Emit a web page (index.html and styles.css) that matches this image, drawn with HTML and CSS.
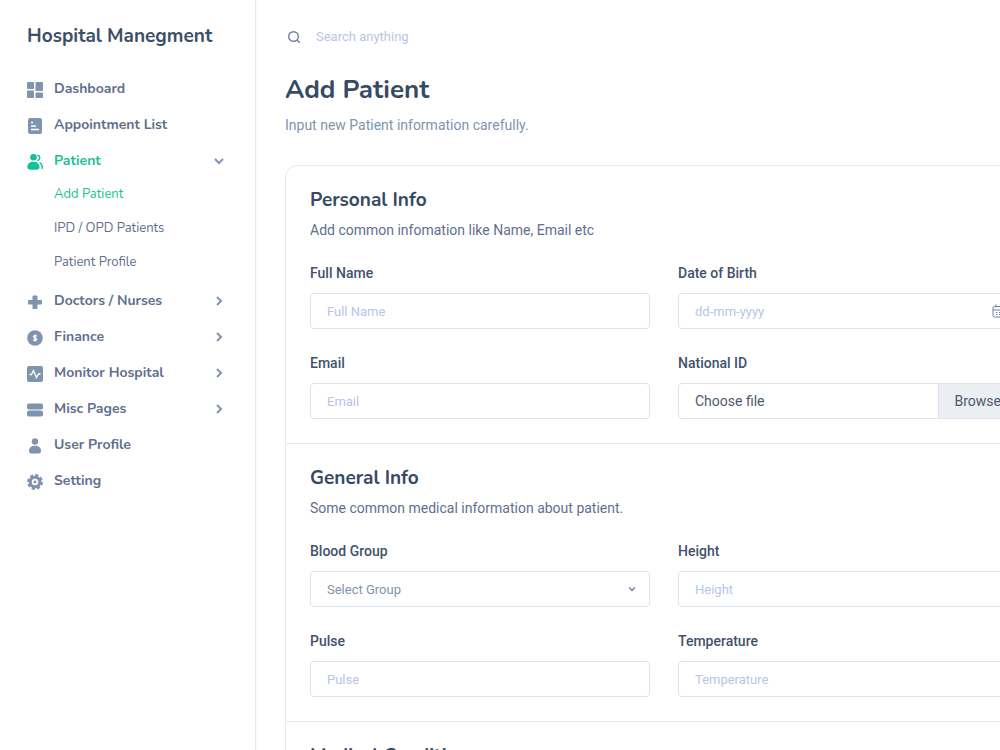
FILE: index.html
```html
<!DOCTYPE html>
<html lang="en">
<head>
  <meta charset="UTF-8" />
  <meta name="viewport" content="width=device-width, initial-scale=1" />
  <title>Add Patient - Hospital Manegment</title>
  <link rel="stylesheet" href="styles.css">
</head>
<body>
  <!-- Sidebar -->
  <aside class="sidebar">
    <a class="brand" href="#">Hospital Manegment</a>

    <nav>
      <ul class="menu">
        <li>
          <a class="menu-link" href="#">
            <svg class="icon" viewBox="0 0 16 16"><rect x="0" y="0" width="7" height="7" rx="1"/><rect x="8.500" y="0" width="7.500" height="9" rx="1"/><rect x="0" y="8.500" width="7" height="7.500" rx="1"/><rect x="8.500" y="10.500" width="7.500" height="5.500" rx="1"/></svg>
            <span>Dashboard</span>
          </a>
        </li>
        <li>
          <a class="menu-link" href="#">
            <svg class="icon" viewBox="0 0 16 16"><rect x="1" y="0" width="14" height="16" rx="2"/><path class="cut" d="M4 4.500h2M4 8h5M4 11.500h8"/></svg>
            <span>Appointment List</span>
          </a>
        </li>
        <li>
          <a class="menu-link active" href="#">
            <svg class="icon" viewBox="0 0 16 16"><circle cx="6.500" cy="3.300" r="3.300"/><path d="M.3 13.200C.3 9.800 3 7.800 6.500 7.800s6 2 6 5.400c0 1.800-1.500 2.600-6 2.600S.3 15 .3 13.200z"/><path class="line" d="M10.800 1.200c2.600.6 2.600 4.400.2 5.200M13 8.800c1.900 1 2.600 3 2.200 5.700"/></svg>
            <span>Patient</span>
            <svg class="arrow" viewBox="0 0 10 10"><path d="M1 3l4 4 4-4"/></svg>
          </a>
          <ul class="submenu">
            <li><a class="active" href="#">Add Patient</a></li>
            <li><a href="#">IPD / OPD Patients</a></li>
            <li><a href="#">Patient Profile</a></li>
          </ul>
        </li>
        <li>
          <a class="menu-link" href="#">
            <svg class="icon" viewBox="0 0 16 16"><path d="M6.500 1.500h3a1 1 0 0 1 1 1v3.500h3.500a1 1 0 0 1 1 1v2.500a1 1 0 0 1-1 1h-3.500v3.500a1 1 0 0 1-1 1h-3a1 1 0 0 1-1-1v-3.500H2a1 1 0 0 1-1-1V7a1 1 0 0 1 1-1h3.500V2.500a1 1 0 0 1 1-1z"/></svg>
            <span>Doctors / Nurses</span>
            <svg class="arrow" viewBox="0 0 10 10"><path d="M3 1l4 4-4 4"/></svg>
          </a>
        </li>
        <li>
          <a class="menu-link" href="#">
            <svg class="icon" viewBox="0 0 16 16"><circle cx="8" cy="8" r="7.800"/><path class="cut" d="M9.800 6.400C9.200 5.300 6.500 5.400 6.500 6.800c0 1.500 3.200.9 3.200 2.500 0 1.400-2.800 1.500-3.500.3M8 4.500v7"/></svg>
            <span>Finance</span>
            <svg class="arrow" viewBox="0 0 10 10"><path d="M3 1l4 4-4 4"/></svg>
          </a>
        </li>
        <li>
          <a class="menu-link" href="#">
            <svg class="icon" viewBox="0 0 16 16"><rect x="0" y="0" width="16" height="16" rx="2"/><path class="cut" d="M2.500 8.500h2L6.500 4.500l3 7L11.500 8h2"/></svg>
            <span>Monitor Hospital</span>
            <svg class="arrow" viewBox="0 0 10 10"><path d="M3 1l4 4-4 4"/></svg>
          </a>
        </li>
        <li>
          <a class="menu-link" href="#">
            <svg class="icon" viewBox="0 0 16 16"><rect x="0" y="1.500" width="16" height="6" rx="2"/><rect x="0" y="8.500" width="16" height="6" rx="2"/></svg>
            <span>Misc Pages</span>
            <svg class="arrow" viewBox="0 0 10 10"><path d="M3 1l4 4-4 4"/></svg>
          </a>
        </li>
        <li>
          <a class="menu-link" href="#">
            <svg class="icon" viewBox="0 0 16 16"><circle cx="8" cy="3.500" r="3.200"/><path d="M2 13c0-3.500 2.500-5.200 6-5.200s6 1.700 6 5.200c0 1.700-1.200 2.500-2.500 2.500h-7C3.200 15.500 2 14.700 2 13z"/></svg>
            <span>User Profile</span>
          </a>
        </li>
        <li>
          <a class="menu-link" href="#">
            <svg class="icon" viewBox="0 0 16 16"><circle cx="8" cy="8" r="6.300"/><circle class="teeth" cx="8" cy="8" r="6.600"/><circle class="hole" cx="8" cy="8" r="3.200"/><circle cx="8" cy="8" r="1.400"/></svg>
            <span>Setting</span>
          </a>
        </li>
      </ul>
    </nav>
  </aside>

  <!-- Page content -->
  <main class="content">
    <form class="search">
      <svg viewBox="0 0 14 14"><circle cx="6.500" cy="6.500" r="4.800"/><path d="M10 10l2.800 2.800"/></svg>
      <input type="text" placeholder="Search anything" aria-label="Search anything" />
    </form>

    <header class="page-head">
      <h1>Add Patient</h1>
      <p>Input new Patient information carefully.</p>
    </header>

    <form class="card">
      <section>
        <h2>Personal Info</h2>
        <p>Add common infomation like Name, Email etc</p>
        <div class="fields">
          <div class="field">
            <label for="fullName">Full Name</label>
            <input type="text" id="fullName" placeholder="Full Name" />
          </div>
          <div class="field">
            <label for="birthDate">Date of Birth</label>
            <div class="control">
              <input type="text" id="birthDate" placeholder="dd-mm-yyyy" />
              <svg class="calendar" viewBox="0 0 14 14"><rect x="1" y="2.500" width="12" height="10.500" rx="1.500"/><path d="M1 6h12M4 .5v3M10 .5v3M4 8.500h1.500M4 10.500h1.500M7 8.500h1.500M7 10.500h1.500"/></svg>
            </div>
          </div>
          <div class="field">
            <label for="email">Email</label>
            <input type="email" id="email" placeholder="Email" />
          </div>
          <div class="field">
            <label for="nationalId">National ID</label>
            <div class="control">
              <input class="file-input" type="file" id="nationalId" />
              <label class="file" for="nationalId">
                <span class="file-name">Choose file</span>
                <span class="file-button">Browse</span>
              </label>
            </div>
          </div>
        </div>
      </section>

      <section>
        <h2>General Info</h2>
        <p>Some common medical information about patient.</p>
        <div class="fields">
          <div class="field">
            <label for="bloodGroup">Blood Group</label>
            <div class="control">
              <select id="bloodGroup">
                <option>Select Group</option>
                <option>A+</option>
                <option>B+</option>
                <option>AB+</option>
                <option>O+</option>
              </select>
              <svg class="caret" viewBox="0 0 8 8"><path d="M1 2.500l3 3 3-3"/></svg>
            </div>
          </div>
          <div class="field">
            <label for="height">Height</label>
            <input type="text" id="height" placeholder="Height" />
          </div>
          <div class="field">
            <label for="pulse">Pulse</label>
            <input type="text" id="pulse" placeholder="Pulse" />
          </div>
          <div class="field">
            <label for="temperature">Temperature</label>
            <input type="text" id="temperature" placeholder="Temperature" />
          </div>
        </div>
      </section>

      <section>
        <h2>Medical Condition</h2>
      </section>
    </form>
  </main>
</body>
</html>
```
FILE: styles.css
```css
* {
  box-sizing: border-box;
  margin: 0;
  padding: 0;
}

body {
  display: flex;
  min-height: 100vh;
  font-family: Roboto, "Liberation Sans", sans-serif;
  font-size: 14px;
  line-height: 24px;
  color: #5f6f8d;
  background: #fff;
  overflow-x: hidden;
}

ul {
  list-style: none;
}

a {
  color: inherit;
  text-decoration: none;
}

/* Sidebar */
.sidebar {
  flex: 0 0 256px;
  padding: 20px 31px 20px 27px;
  border-right: 1px solid #e5e9f2;
  box-shadow: 0 1px 3px rgba(54, 74, 99, 0.05);
}

.sidebar,
h1,
h2 {
  font-family: Nunito, Lato, sans-serif;
}

.brand {
  display: block;
  margin-bottom: 19px;
  font-size: 19px;
  font-weight: 700;
  line-height: 32px;
  color: #3c4f68;
  white-space: nowrap;
}

.menu-link {
  display: flex;
  align-items: center;
  gap: 11px;
  height: 36px;
  font-size: 14px;
  font-weight: 700;
}

.icon {
  width: 16px;
  height: 16px;
  margin-top: 2px;
  fill: #8094ae;
}

.icon .cut {
  fill: none;
  stroke: #fff;
  stroke-width: 1.3;
}

.icon .line {
  fill: none;
  stroke: #8094ae;
  stroke-width: 1.4;
  stroke-linecap: round;
}

.icon .teeth {
  fill: none;
  stroke: #8094ae;
  stroke-width: 2.6;
  stroke-dasharray: 3.2 1.98;
}

.icon .hole {
  fill: #fff;
}

.arrow {
  width: 10px;
  height: 10px;
  margin-left: auto;
  fill: none;
  stroke: #8094ae;
  stroke-width: 2;
}

.active {
  color: #1ebf94;
}

.active .icon {
  fill: #12c196;
}

.active .icon .line {
  stroke: #12c196;
}

.submenu {
  margin-top: -2px;
  padding: 0 0 4px 27px;
}

.submenu a {
  display: block;
  font-size: 13px;
  font-weight: 400;
  line-height: 34px;
}

/* Content */
.content {
  flex: 1;
  padding: 20px 29px;
}

.search {
  display: flex;
  align-items: center;
  gap: 15px;
  height: 34px;
  padding-left: 2px;
  margin-bottom: 18px;
}

.search svg {
  width: 14px;
  height: 14px;
  fill: none;
  stroke: #6e82a5;
  stroke-width: 1.4;
}

.search input {
  flex: 1;
  border: none;
  outline: none;
  font: inherit;
  font-size: 13px;
}

h1 {
  font-size: 26px;
  font-weight: 700;
  line-height: 36px;
  color: #364a63;
}

.page-head {
  margin-bottom: 28px;
}

.page-head p {
  margin-top: 5px;
  color: #8094ae;
}

/* Form card */
.card {
  border: 1px solid #e5e9f2;
  border-radius: 12px;
}

.card section {
  padding: 20px 24px 24px;
}

.card section + section {
  border-top: 1px solid #e5e9f2;
}

h2 {
  margin-bottom: 4px;
  font-size: 19px;
  font-weight: 700;
  line-height: 28px;
  color: #364a63;
}

.card p {
  margin-bottom: 20px;
}

.fields {
  display: grid;
  grid-template-columns: repeat(2, minmax(340px, 1fr));
  gap: 23px 28px;
}

.field > label {
  display: block;
  margin-bottom: 9px;
  font-weight: 500;
  line-height: 22px;
  color: #42526b;
}

.control {
  position: relative;
}

.field input,
.field select,
.file {
  display: block;
  width: 100%;
  height: 36px;
  padding: 0 16px;
  border: 1px solid #dfe3ee;
  border-radius: 4px;
  background: #fff;
  font-family: inherit;
  font-size: 13px;
  color: #4c5a6e;
}

input::placeholder {
  color: #b7c5e6;
}

.field select {
  appearance: none;
  color: #8094ae;
}

.control svg {
  position: absolute;
  top: 50%;
  transform: translateY(-50%);
  fill: none;
  stroke: #6e82a5;
}

.caret {
  right: 14px;
  width: 8px;
  height: 8px;
  stroke-width: 1.3;
}

.calendar {
  right: 12px;
  width: 14px;
  height: 14px;
}

.field .file-input {
  position: absolute;
  opacity: 0;
}

.file {
  display: flex;
  padding-right: 0;
  overflow: hidden;
  font-size: 14px;
  line-height: 34px;
}

.file-name {
  flex: 1;
}

.file-button {
  padding: 0 16px;
  border-left: 1px solid #dfe3ee;
  background: #ebeef2;
}
```
